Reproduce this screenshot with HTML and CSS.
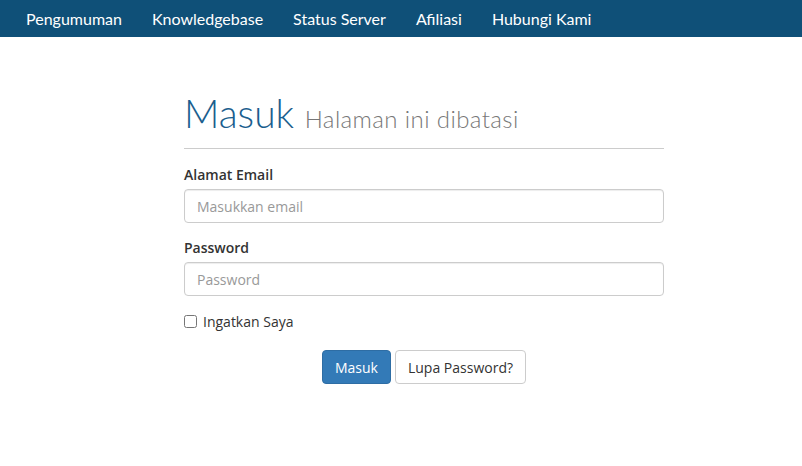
FILE: index.html
```html
<!DOCTYPE html>
<html>
	<head>
		<meta charset="utf-8"/>
		<title>Masuk</title>
		<link rel="stylesheet" href="styles.css">
	</head>
	<body>
		<div class="topnav">
			<a href="#">Pengumuman</a>
			<a href="#">Knowledgebase</a>
			<a href="#">Status Server</a>
			<a href="#">Afiliasi</a>
			<a href="#">Hubungi Kami</a>
		</div>
		<div class="login">
			<h1 class="title">Masuk <small>Halaman ini dibatasi</small></h1>
			<form>
				<label class="field-label" for="email">Alamat Email</label>
				<input class="field" type="email" id="email" placeholder="Masukkan email">
				<label class="field-label" for="pass">Password</label>
				<input class="field" type="password" id="pass" placeholder="Password">
				<label class="remember"><input type="checkbox"> Ingatkan Saya</label>
				<div class="actions">
					<button type="submit" class="btn btn-primary">Masuk</button>
					<button type="button" class="btn btn-default">Lupa Password?</button>
				</div>
			</form>
		</div>
	</body>
</html>
```

FILE: styles.css
```css
body {
	margin: 0;
	font-family: "Open Sans", "Liberation Sans", sans-serif;
	font-size: 14px;
	color: #333;
	background: #fff;
}
.topnav {
	background: #0f5078;
	height: 37px;
	display: flex;
	align-items: center;
	padding: 0 11px;
}
.topnav a {
	color: #fff;
	text-decoration: none;
	font-family: Lato, "Open Sans", sans-serif;
	font-size: 16px;
	padding: 0 15px;
}
.login {
	width: 480px;
	margin: 54px 0 0 184px;
}
.title {
	margin: 0 0 16px;
	padding-bottom: 7px;
	border-bottom: 1px solid #ccc;
	font-family: Lato, "Open Sans", sans-serif;
	font-weight: 300;
	font-size: 39px;
	line-height: 44px;
	color: #1a5e8e;
}
.title small {
	font-size: 24px;
	color: #777;
	font-weight: 300;
	letter-spacing: 0.4px;
}
.field-label {
	display: block;
	font-weight: 600;
	margin-bottom: 5px;
}
.field {
	display: block;
	box-sizing: border-box;
	width: 100%;
	height: 34px;
	padding: 6px 12px;
	margin-bottom: 15px;
	border: 1px solid #ccc;
	border-radius: 4px;
	box-shadow: inset 0 1px 1px rgba(0,0,0,.075);
	font-family: "Open Sans", sans-serif;
	font-size: 14px;
}
.field::placeholder {
	color: #999;
}
#pass {
	margin-top: 1px;
}
.remember {
	display: flex;
	align-items: center;
	gap: 6px;
	margin: 16px 0 19px;
}
.remember input {
	margin: 0;
	width: 13px;
	height: 13px;
}
.actions {
	display: flex;
	justify-content: center;
	gap: 4px;
}
.btn {
	height: 34px;
	padding: 6px 12px;
	border-radius: 4px;
	font-family: "Open Sans", sans-serif;
	font-size: 14px;
	border: 1px solid #ccc;
}
.btn-primary {
	background: #337ab7;
	border-color: #2e6da4;
	color: #fff;
}
.btn-default {
	background: #fff;
	color: #333;
}
```
